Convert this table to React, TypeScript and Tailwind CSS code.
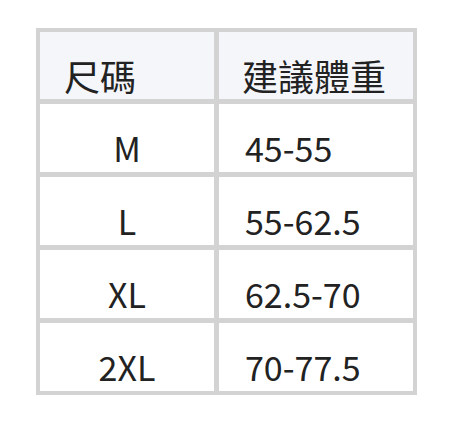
const rows = [
  { size: 'M', weight: '45-55' },
  { size: 'L', weight: '55-62.5' },
  { size: 'XL', weight: '62.5-70' },
  { size: '2XL', weight: '70-77.5' },
];

export default function App() {
  return (
    <div className="min-h-[422px] w-[452px] bg-white pl-[36px] pt-[28px] text-[#222] [font-family:'Noto_Sans_CJK_TC','Noto_Sans',sans-serif]">
      <div className="grid w-[381px] grid-cols-[174px_194px] gap-[5px] bg-[#d3d3d3] p-[4px] leading-[36px]">
        <div className="flex h-[67px] items-end bg-[#f5f6fa] pb-[6px] pl-[24px] text-[36px]">尺碼</div>
        <div className="flex h-[67px] items-end bg-[#f5f6fa] pb-[6px] pl-[23px] text-[36px]">建議體重</div>
        {rows.map((r) => (
          <>
            <div key={r.size} className="flex h-[68px] items-end justify-center bg-white pb-[6px] text-[34px]">
              {r.size}
            </div>
            <div key={r.weight} className="flex h-[68px] items-end bg-white pb-[6px] pl-[26px] text-[34px]">
              {r.weight}
            </div>
          </>
        ))}
      </div>
    </div>
  );
}
